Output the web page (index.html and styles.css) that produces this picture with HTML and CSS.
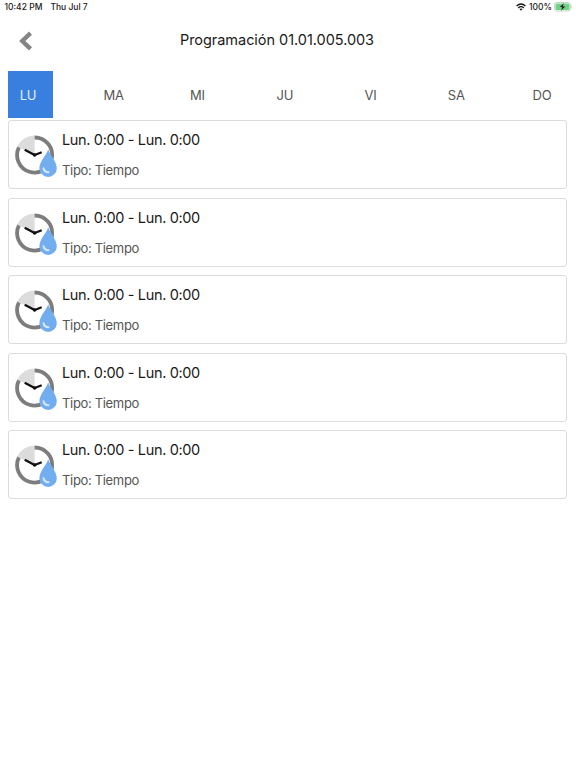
FILE: index.html
```html
<!DOCTYPE html>
<html lang="es">
<head>
    <meta charset="utf-8">
    <title>Programación</title>
    <link rel="stylesheet" href="styles.css">
</head>
<body>
    <svg width="0" height="0" class="defs">
        <symbol id="timer" viewBox="0 0 43 43">
            <path d="M19.6 20V0.6A19.4 19.4 0 0 0 2.2 11.6Z" fill="#dcdcdc"/>
            <path d="M19.6 2.5A17.5 17.5 0 1 1 3.9 12.3" fill="none" stroke="#7d7d7d" stroke-width="3.8"/>
            <path d="M9.7 14.7L19.6 20L26.7 17.3" fill="none" stroke="#111" stroke-width="2.2"/>
            <circle cx="19.6" cy="20" r="1.8" fill="#111"/>
            <path d="M33.2 14.3C34.8 20 41.8 26.5 41.8 33.2A8.7 8.7 0 0 1 24.4 33.2C24.4 26.5 31.5 20 33.2 14.3Z" fill="#72aeef"/>
            <path d="M28.5 33.2Q29.3 37 33.5 37.2" fill="none" stroke="#d5e9ff" stroke-width="2" stroke-linecap="round"/>
        </symbol>
    </svg>

    <div class="status">
        <span>10:42 PM</span>
        <span class="date">Thu Jul 7</span>
        <svg class="wifi" width="10" height="8" viewBox="0 0 10 8">
            <path d="M0.6 3Q5 -1 9.4 3M2.2 4.9Q5 2.5 7.8 4.9" fill="none" stroke="#111" stroke-width="1.3"/>
            <path d="M3.5 6.1Q5 5 6.5 6.1L5 7.7Z" fill="#111"/>
        </svg>
        <span class="percent">100%</span>
        <svg width="19" height="10" viewBox="0 0 19 10">
            <rect x="0.5" y="0.5" width="16" height="8.5" rx="2.5" fill="#fff" stroke="#b5c9b9" stroke-width="0.8"/>
            <rect x="1.5" y="1.5" width="14" height="6.5" rx="1.5" fill="#6bd583"/>
            <path d="M17.5 3.3Q18.8 4.8 17.5 6.2Z" fill="#a5b5a8"/>
            <path d="M10.2 0.8L5.2 5.3H8L6.8 8.9L11.8 4.2H9Z" fill="#111" stroke="#d5f5dc" stroke-width="0.3"/>
        </svg>
    </div>

    <div class="header">
        <svg class="back" width="16" height="22" viewBox="0 0 16 22">
            <path d="M12.5 3.2L4.3 11L12.5 18.8" fill="none" stroke="#858585" stroke-width="4.4"/>
        </svg>
        <h1>Programación 01.01.005.003</h1>
    </div>

    <div class="days">
        <div class="day active">LU</div>
        <div class="day">MA</div>
        <div class="day short">MI</div>
        <div class="day">JU</div>
        <div class="day">VI</div>
        <div class="day">SA</div>
        <div class="day">DO</div>
    </div>

    <div class="list">
        <div class="card">
            <svg class="icon"><use href="#timer"/></svg>
            <div>
                <div class="time">Lun. 0:00 - Lun. 0:00</div>
                <div class="type">Tipo: Tiempo</div>
            </div>
        </div>
        <div class="card">
            <svg class="icon"><use href="#timer"/></svg>
            <div>
                <div class="time">Lun. 0:00 - Lun. 0:00</div>
                <div class="type">Tipo: Tiempo</div>
            </div>
        </div>
        <div class="card">
            <svg class="icon"><use href="#timer"/></svg>
            <div>
                <div class="time">Lun. 0:00 - Lun. 0:00</div>
                <div class="type">Tipo: Tiempo</div>
            </div>
        </div>
        <div class="card">
            <svg class="icon"><use href="#timer"/></svg>
            <div>
                <div class="time">Lun. 0:00 - Lun. 0:00</div>
                <div class="type">Tipo: Tiempo</div>
            </div>
        </div>
        <div class="card">
            <svg class="icon"><use href="#timer"/></svg>
            <div>
                <div class="time">Lun. 0:00 - Lun. 0:00</div>
                <div class="type">Tipo: Tiempo</div>
            </div>
        </div>
    </div>
</body>
</html>
```
FILE: styles.css
```css
body {
    margin: 0;
    background: #fff;
    color: #1a1a1a;
    font-family: Inter, "Liberation Sans", sans-serif;
}
.defs {
    display: block;
}
.status {
    display: flex;
    align-items: center;
    height: 14px;
    padding: 0 3px 0 4.5px;
    font-size: 8.5px;
    font-weight: 500;
    white-space: nowrap;
}
.date {
    margin-left: 8px;
}
.wifi {
    margin-left: auto;
}
.percent {
    margin: 0 2px 0 3px;
}
.header {
    display: grid;
    grid-template-columns: 40px 1fr 40px;
    align-items: center;
    height: 53px;
    padding: 0 20px 0 18px;
}
.back {
    margin-top: 1px;
}
h1 {
    margin: 0 20px 2px 0;
    font-size: 14.5px;
    font-weight: 400;
    letter-spacing: -0.04px;
    text-align: center;
}
.days {
    display: flex;
    justify-content: space-between;
    margin: 4.4px 9px 0 8px;
}
.day {
    box-sizing: border-box;
    width: 45px;
    padding: 2px 5px 0 0;
    line-height: 45px;
    font-size: 13px;
    letter-spacing: -0.2px;
    text-align: center;
    color: #555;
}
.day.short {
    padding-right: 9px;
}
.day.active {
    background: #397fe0;
    color: #e5f0ff;
}
.list {
    display: flex;
    flex-direction: column;
    gap: 8.5px;
    margin: 2px 9px 0 8px;
}
.card {
    display: flex;
    box-sizing: border-box;
    height: 69px;
    padding: 14px 6px 0;
    border: 1px solid #dcdcdc;
    border-radius: 3px;
}
.icon {
    width: 43px;
    height: 43px;
    margin-right: 4px;
}
.time {
    margin-top: -5px;
    font-size: 14.5px;
    line-height: 20px;
    letter-spacing: -0.35px;
}
.type {
    margin-top: 11px;
    font-size: 13px;
    line-height: 18px;
    letter-spacing: -0.33px;
    color: #555;
}
```
